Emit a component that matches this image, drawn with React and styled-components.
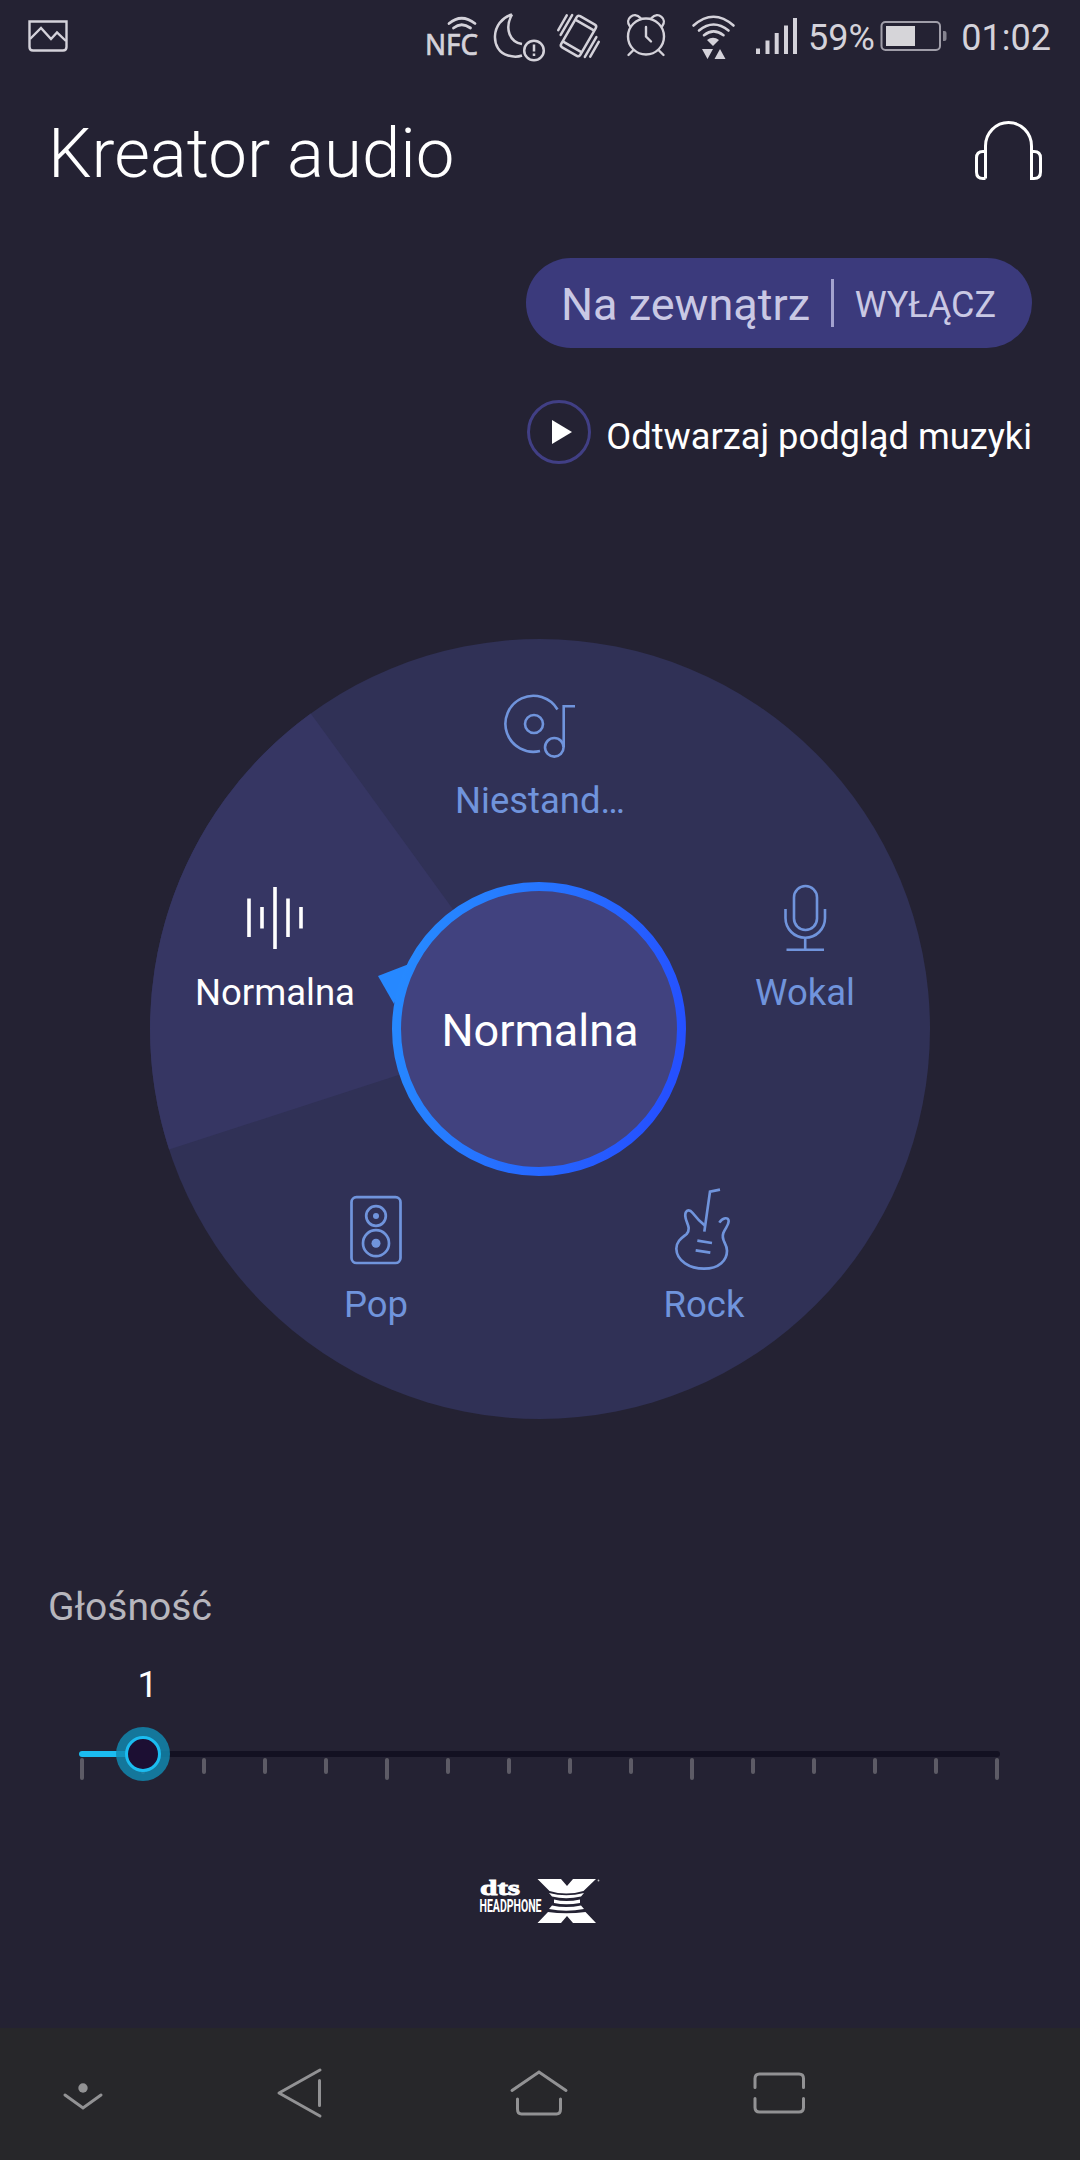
import React from "react";
import styled, { createGlobalStyle } from "styled-components";

const GlobalStyle = createGlobalStyle`
  * { box-sizing: border-box; }
  body { margin: 0; background: #242233; font-family: Roboto, "Noto Sans", sans-serif; }
  svg { display: block; flex: none; }
  button { font: inherit; color: inherit; border: 0; padding: 0; background: none; }
`;

const Screen = styled.div`
  width: 1080px;
  height: 2160px;
  display: flex;
  flex-direction: column;
  background: #242233;
  color: #fff;
  overflow: hidden;
`;

const StatusBar = styled.div`
  height: 80px;
  flex: none;
  display: flex;
  align-items: flex-start;
  justify-content: space-between;
  padding: 0 28px 0 24px;
  color: #d4d2da;
`;

const StatusGroup = styled.div`
  display: flex;
`;

const StatusText = styled.span`
  width: ${(p) => p.$width}px;
  padding-top: 17px;
  padding-right: ${(p) => p.$inset || 0}px;
  font-size: ${(p) => p.$size}px;
  line-height: 42px;
  text-align: ${(p) => p.$align || "left"};
  white-space: nowrap;
`;

const Header = styled.header`
  display: flex;
  align-items: center;
  justify-content: space-between;
  height: 114px;
  padding: 32px 36px 0 48px;
`;

const Title = styled.h1`
  margin: 0;
  padding-top: 2px;
  font-size: 69px;
  font-weight: 300;
  line-height: 82px;
`;

const Actions = styled.section`
  display: flex;
  flex-direction: column;
  align-items: flex-end;
  gap: 52px;
  padding: 64px 48px 0;
`;

const Pill = styled.div`
  width: 506px;
  height: 90px;
  border-radius: 45px;
  background: #3b3a7c;
  color: #c9c8e4;
  display: flex;
  align-items: center;
  justify-content: space-between;
  padding: 0 36px 0 35px;
`;

const PillLabel = styled.span`
  padding-top: 3px;
  font-size: 45px;
  white-space: nowrap;
`;

const PillButton = styled.button`
  padding-top: 3px;
  font-size: 36px;
`;

const PillDivider = styled.span`
  width: 3px;
  height: 48px;
  background: #a3a2cf;
`;

const PreviewRow = styled.div`
  width: 506px;
  height: 64px;
  display: flex;
  align-items: center;
  justify-content: space-between;
`;

const PreviewLabel = styled.span`
  padding-top: 9px;
  font-size: 36.25px;
  white-space: nowrap;
`;

const Dial = styled.section`
  position: relative;
  width: 780px;
  height: 780px;
  margin: 175px auto 0;
  flex: none;
`;

const Preset = styled.button`
  position: absolute;
  left: ${(p) => p.$x - 100}px;
  top: ${(p) => p.$y - 110}px;
  width: 200px;
  display: flex;
  flex-direction: column;
  align-items: center;
  color: ${(p) => (p.$active ? "#fff" : "#7094dc")};
`;

const PresetLabel = styled.span`
  margin-top: 17px;
  font-size: 36.5px;
  line-height: 42px;
`;

const Hub = styled.div`
  position: absolute;
  left: 243px;
  top: 243px;
  width: 294px;
  height: 294px;
  display: flex;
  align-items: center;
  justify-content: center;
  font-size: 45px;
  padding-top: 3px;
`;

const Volume = styled.section`
  padding: 165px 79px 0 79px;
`;

const VolumeTitle = styled.h2`
  margin: 0 0 34px -31px;
  font-size: 39px;
  font-weight: 400;
  line-height: 46px;
  color: #b7b6bd;
`;

const VolumeValue = styled.div`
  width: 40px;
  margin-left: 48.5px;
  font-size: 36px;
  line-height: 42px;
  text-align: center;
`;

const Slider = styled.div`
  position: relative;
  margin-top: 45px;
  width: 921px;
`;

const Track = styled.div`
  height: 6px;
  border-radius: 3px;
  background: #131122;
`;

const Filled = styled.div`
  height: 6px;
  width: 64px;
  border-radius: 3px;
  background: #1bbcf0;
`;

const Ticks = styled.div`
  display: flex;
  justify-content: space-between;
  padding: 1px 1px 0;
`;

const Tick = styled.span`
  width: 4px;
  height: ${(p) => (p.$major ? 22 : 16)}px;
  border-radius: 2px;
  background: #5d5b66;
`;

const Knob = styled.span`
  position: absolute;
  left: 37px;
  top: -24px;
  width: 54px;
  height: 54px;
  border-radius: 50%;
  background: rgba(17, 138, 178, 0.82);
  display: flex;
  align-items: center;
  justify-content: center;

  &::after {
    content: "";
    width: 30px;
    height: 30px;
    border-radius: 50%;
    border: 3px solid #1bbcf0;
    background: #1c0f33;
  }
`;

const Brand = styled.footer`
  display: flex;
  justify-content: center;
  padding-top: 95px;
`;

const NavBar = styled.nav`
  flex: none;
  height: 132px;
  margin-top: auto;
  background: #27272a;
  color: #929294;
  display: flex;
  align-items: center;
  padding-left: 23px;
`;

const Drawing = ({ box, children, sw = 3, ...rest }) => {
  const [, , w, h] = box;
  return (
    <svg
      width={w}
      height={h}
      viewBox={box.join(" ")}
      fill="none"
      stroke="currentColor"
      strokeWidth={sw}
      {...rest}
    >
      {children}
    </svg>
  );
};

const PictureIcon = () => (
  <Drawing box={[24, 0, 50, 80]} sw={2.4}>
    <path d="M29.5 21.5H66.500V47Q66.500 50.500 63 50.500H33Q29.500 50.500 29.500 47Z" />
    <path d="M30 39L41 28L51 39L57 32.500L66 41" />
  </Drawing>
);

const NfcIcon = () => (
  <Drawing box={[424, 0, 64, 80]} sw={2.8} strokeLinecap="round">
    <path d="M449 23.500Q461.500 13 475 23.500M453.500 28Q461.500 21.500 470.500 28" />
    <text
      x="425"
      y="55"
      fontFamily="Noto Sans, sans-serif"
      fontSize="29.500"
      textLength="53"
      lengthAdjust="spacingAndGlyphs"
      fill="currentColor"
      strokeWidth="0.700"
    >
      NFC
    </text>
  </Drawing>
);

const MoonIcon = () => (
  <Drawing box={[488, 0, 62, 80]} sw={2.5}>
    <path d="M512 14.500C490 21 490 51 508 55.500C513 57 518 57 522 55.500M512 14.500C504 29 510 42 522 44" strokeLinejoin="round" />
    <circle cx="534" cy="50.500" r="9.800" />
    <path d="M534 44.500V51.500M534 53.500V56" />
  </Drawing>
);

const VibrateIcon = () => (
  <Drawing box={[550, 0, 60, 80]} sw={2.5} strokeLinecap="round">
    <g transform="rotate(30 578.500 36)">
      <rect x="567.500" y="18" width="22" height="36" rx="2.500" />
      <path d="M568 23.500H589M568 48.500H589M562.500 21V44M558 24V41M594.500 28V51M599 31V48" />
    </g>
  </Drawing>
);

const AlarmIcon = () => (
  <Drawing box={[610, 0, 72, 80]} sw={2.4} strokeLinecap="round">
    <circle cx="646" cy="36.500" r="18" />
    <path d="M646 27V36.500L651 41.500M633.500 50L628.500 55M658.500 50L663.500 55" />
    <path d="M630 26.500C624 19 634 11 640.500 18M662 26.500C668 19 658 11 651.500 18" />
  </Drawing>
);

const WifiIcon = () => (
  <Drawing box={[682, 0, 66, 80]} sw={2.6} strokeLinecap="round">
    <path d="M693.500 25.500Q713.500 8 733.500 25.500M699 30.500Q713.500 18.500 728.500 30.500M704 35.200Q713.500 27.500 723.500 35.200" />
    <path d="M707 40Q713 35.500 719 40L713 46Z" fill="currentColor" stroke="none" />
    <path d="M702 49H713L707.500 59ZM714.500 59H725.500L720 49Z" fill="currentColor" stroke="none" />
  </Drawing>
);

const SignalIcon = () => (
  <Drawing box={[748, 0, 60, 80]} sw={4}>
    <path d="M758 48.500V54M767.500 40.500V54M776.700 33V54M786 25.500V54M795 18V54" />
  </Drawing>
);

const BatteryIcon = () => (
  <Drawing box={[876, 0, 80, 80]} sw={2}>
    <rect x="881.500" y="22" width="58.500" height="28" rx="4" stroke="#a09ea9" />
    <rect x="886" y="26" width="29" height="20" fill="#d6d5d9" stroke="none" />
    <path d="M943 31H944.500Q946.500 31 946.500 33V39Q946.500 41 944.500 41H943Z" fill="#85838f" stroke="none" />
  </Drawing>
);

const HeadphonesIcon = () => (
  <Drawing box={[972, 118, 72, 70]} sw={3}>
    <path d="M985.500 178.500V146A23 23.500 0 0 1 1031.500 146V178.500H1034Q1040.500 178.500 1040.500 172V158Q1040.500 151.500 1034 151.500H1031.500M985.500 178.500H983Q976.500 178.500 976.500 172V158Q976.500 151.500 983 151.500H985.500" />
  </Drawing>
);

const PlayIcon = () => (
  <Drawing box={[526, 400, 66, 64]} sw={3}>
    <circle cx="559" cy="432" r="30.500" stroke="#413f85" />
    <path d="M552 420L572 432L552 444Z" fill="#fff" stroke="none" />
  </Drawing>
);

const CustomIcon = () => (
  <Drawing box={[490, 683, 100, 80]} sw={2.6}>
    <path d="M557.500 709.500A28 28 0 1 0 540 751" />
    <circle cx="534" cy="724" r="9" />
    <circle cx="554.300" cy="747.300" r="9.300" />
    <path d="M563.700 747V706.300H575" />
  </Drawing>
);

const VocalIcon = () => (
  <Drawing box={[755, 875, 100, 80]} sw={2.6}>
    <rect x="794" y="886" width="23" height="44" rx="11.500" />
    <path d="M785.500 909V918A19.700 19.700 0 0 0 825 918V909M805.200 938V949M786.500 949.700H824" />
  </Drawing>
);

const NormalIcon = () => (
  <Drawing box={[225, 875, 100, 80]} sw={3.600}>
    <path d="M249 898.500V937M262 907V928.500M275 887V949M288 898.500V937M301 907V928.500" />
  </Drawing>
);

const PopIcon = () => (
  <Drawing box={[326, 1187, 100, 80]} sw={2.700}>
    <rect x="351.500" y="1197.200" width="49" height="65.800" rx="5" />
    <circle cx="376" cy="1216" r="9.800" />
    <circle cx="376" cy="1243.200" r="13" />
    <circle cx="376" cy="1216" r="3" fill="currentColor" stroke="none" />
    <circle cx="376" cy="1243.200" r="4.500" fill="currentColor" stroke="none" />
  </Drawing>
);

const RockIcon = () => (
  <Drawing box={[654, 1187, 100, 80]} sw={8} overflow="visible">
    <g transform="translate(300 1160) scale(0.33333)">
      <path d="M1260 89L1230 95L1213 215M1192 242L1236 249M1187 271L1231 278" />
      <path d="M1215 197C1200 185 1188 172 1178 159C1166 144 1152 152 1157 175C1160 190 1174 206 1160 222C1148 232 1129 242 1129 266C1130 303 1170 326 1212 326C1258 326 1281 300 1281 272C1281 248 1262 242 1270 219C1276 204 1286 196 1286 184C1286 170 1268 172 1258 188" />
    </g>
  </Drawing>
);

const DialArt = () => (
  <svg width="780" height="780" viewBox="150 639 780 780">
    <defs>
      <linearGradient id="ring" x1="0" y1="0.3" x2="1" y2="0.55">
        <stop offset="0" stopColor="#268aff" />
        <stop offset="0.25" stopColor="#267eff" />
        <stop offset="1" stopColor="#2550ff" />
      </linearGradient>
    </defs>
    <circle cx="540" cy="1029" r="390" fill="#303156" />
    <path d="M540 1029L310.800 713.500A390 390 0 0 0 169.100 1149.500Z" fill="#363663" />
    <path d="M378 976L409 964L394 1004Z" fill="#2688ff" />
    <circle cx="539" cy="1029" r="142.500" fill="#41427f" stroke="url(#ring)" strokeWidth="9" />
  </svg>
);

const BrandLogo = () => (
  <Drawing box={[476, 1875, 128, 50]} fill="#fff" stroke="none">
    <text x="480" y="1894.500" fontFamily="Liberation Serif, serif" fontWeight="700" fontSize="22" textLength="40" lengthAdjust="spacingAndGlyphs" stroke="#fff" strokeWidth="0.900">
      dts
    </text>
    <text transform="translate(479.500 1912) scale(0.620 1)" fontFamily="Roboto, sans-serif" fontWeight="700" fontSize="18" textLength="100" lengthAdjust="spacingAndGlyphs">
      HEADPHONE
    </text>
    <path d="M537.500 1879H561L567 1886L573 1879H596L583.500 1891Q566 1896 549.500 1891Z" />
    <path d="M549 1893Q566 1897.500 584 1893L581 1896.500Q566 1900 552 1896.500Z" />
    <path d="M554 1899.500Q566 1902.500 580 1899.500V1903Q566 1905.500 554 1903Z" />
    <path d="M552 1905.500Q566 1908.500 581 1905.500L584 1909Q566 1912.500 549 1909Z" />
    <path d="M548 1912Q566 1914.500 585.500 1912L596 1923H573L567 1916L561 1923H537.500Z" />
    <circle cx="598.500" cy="1880.500" r="0.900" opacity="0.700" />
  </Drawing>
);

const presets = [
  { label: "Niestand…", x: 390, y: 154, icon: CustomIcon },
  { label: "Wokal", x: 655, y: 346, icon: VocalIcon },
  { label: "Rock", x: 554, y: 658, icon: RockIcon },
  { label: "Pop", x: 226, y: 658, icon: PopIcon },
  { label: "Normalna", x: 125, y: 346, icon: NormalIcon, active: true },
];

export default function App() {
  return (
    <Screen>
      <GlobalStyle />
      <StatusBar>
        <PictureIcon />
        <StatusGroup>
          <NfcIcon />
          <MoonIcon />
          <VibrateIcon />
          <AlarmIcon />
          <WifiIcon />
          <SignalIcon />
          <StatusText $width={68} $size={36}>59%</StatusText>
          <BatteryIcon />
          <StatusText $width={96} $size={36} $align="right" $inset={1}>01:02</StatusText>
        </StatusGroup>
      </StatusBar>

      <Header>
        <Title>Kreator audio</Title>
        <HeadphonesIcon />
      </Header>

      <Actions>
        <Pill>
          <PillLabel>Na zewnątrz</PillLabel>
          <PillDivider />
          <PillButton>WYŁĄCZ</PillButton>
        </Pill>
        <PreviewRow>
          <PlayIcon />
          <PreviewLabel>Odtwarzaj podgląd muzyki</PreviewLabel>
        </PreviewRow>
      </Actions>

      <Dial>
        <DialArt />
        {presets.map(({ label, x, y, icon: Icon, active }) => (
          <Preset key={label} $x={x} $y={y} $active={active}>
            <Icon />
            <PresetLabel>{label}</PresetLabel>
          </Preset>
        ))}
        <Hub>Normalna</Hub>
      </Dial>

      <Volume>
        <VolumeTitle>Głośność</VolumeTitle>
        <VolumeValue>1</VolumeValue>
        <Slider>
          <Track>
            <Filled />
          </Track>
          <Ticks>
            {Array.from({ length: 16 }, (_, i) => (
              <Tick key={i} $major={i % 5 === 0} />
            ))}
          </Ticks>
          <Knob />
        </Slider>
      </Volume>

      <Brand>
        <BrandLogo />
      </Brand>

      <NavBar>
        <Drawing box={[23, 2054, 216, 80]} strokeLinecap="round">
          <path d="M65 2095L83 2108L101 2095" />
          <circle cx="83" cy="2088" r="4.700" fill="currentColor" stroke="none" />
        </Drawing>
        <Drawing box={[239, 2054, 240, 80]} strokeLinecap="round" strokeLinejoin="round">
          <path d="M320 2070L279 2093L320 2116M319.500 2080.500V2105.500" />
        </Drawing>
        <Drawing box={[479, 2054, 240, 80]} strokeLinecap="round">
          <path d="M512 2090.500L539 2072L566 2090.500M517.500 2099V2109Q517.500 2114 521.500 2114H556.500Q560.500 2114 560.500 2109V2099" />
        </Drawing>
        <Drawing box={[719, 2054, 144, 80]} strokeLinecap="round">
          <path d="M755 2087.500V2078.500Q755 2074 759.500 2074H799Q803.500 2074 803.500 2078.500V2087.500M755 2098.500V2107.500Q755 2112 759.500 2112H799Q803.500 2112 803.500 2107.500V2098.500" />
        </Drawing>
      </NavBar>
    </Screen>
  );
}
